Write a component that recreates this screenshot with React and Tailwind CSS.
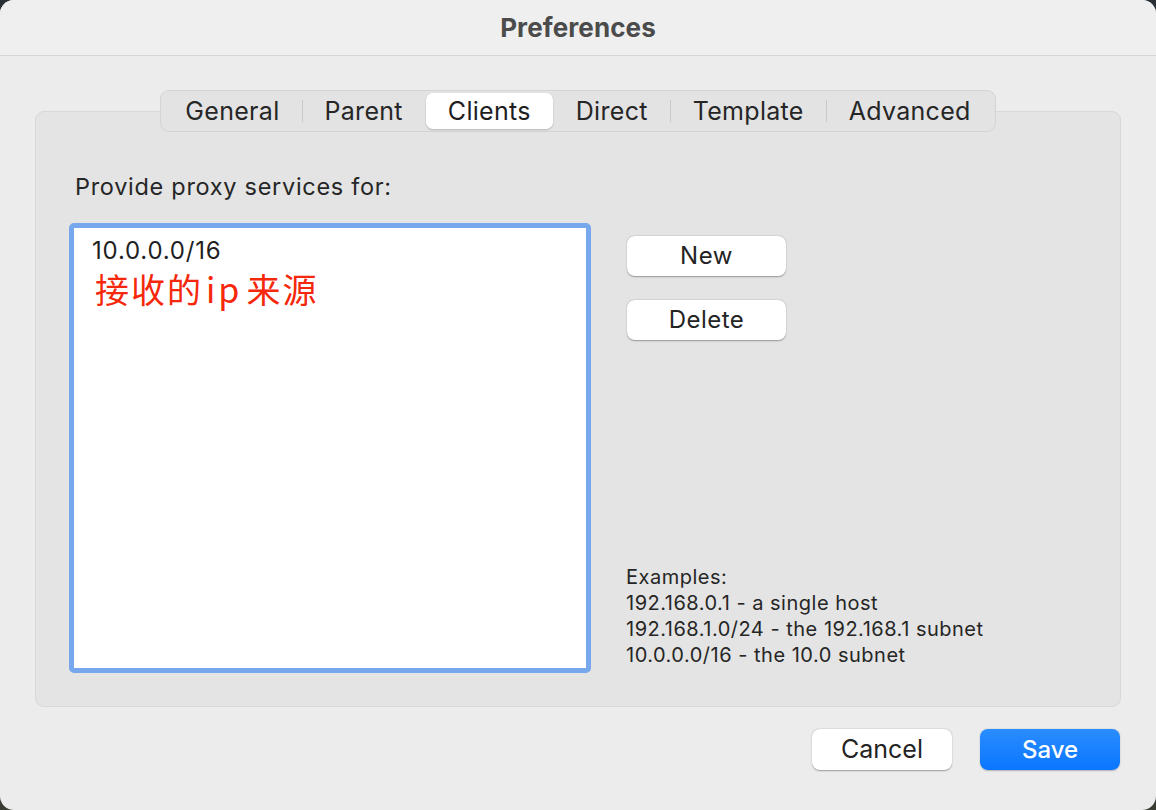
import React, { useState } from 'react';

const tabs = ['General', 'Parent', 'Clients', 'Direct', 'Template', 'Advanced'];

function Tabs({ active, onSelect }) {
    return (
        <div className="flex items-center h-[42px] p-[2px] bg-[#e3e3e3] border border-[#d4d4d4] rounded-[9px]">
            {tabs.map((t, i) => {
                const isActive = t === active;
                const prevActive = i > 0 && tabs[i - 1] === active;
                const showSep = i > 0 && !isActive && !prevActive;
                return (
                    <React.Fragment key={t}>
                        {i > 0 && (
                            <div className={showSep ? 'w-px h-[22px] bg-[#c9c9c9]' : 'w-px h-[22px]'} />
                        )}
                        <button
                            onClick={() => onSelect(t)}
                            className={
                                isActive
                                    ? 'h-[36px] px-[22px] rounded-[7px] bg-white shadow-[0_1px_2px_rgba(0,0,0,0.2)] text-[25px] tracking-[0.3px] text-[#1e1e1e]'
                                    : 'h-[36px] px-[22px] rounded-[7px] text-[25px] tracking-[0.3px] text-[#262626]'
                            }
                        >
                            {t}
                        </button>
                    </React.Fragment>
                );
            })}
        </div>
    );
}

function PlainButton({ children, className }) {
    return (
        <button
            className={
                'bg-white rounded-[8px] shadow-[0_0.5px_1.5px_rgba(0,0,0,0.35)] text-[#242424] ' +
                className
            }
        >
            {children}
        </button>
    );
}

export default function App() {
    const [active, setActive] = useState('Clients');

    return (
        <div className="w-[1156px] h-[810px] bg-[linear-gradient(to_bottom,#2a2f35,#3a3d33)] font-['Inter','Noto_Sans_CJK_SC',sans-serif]">
            <div className="w-full h-full flex flex-col bg-[#ececec] rounded-[14px] overflow-hidden">
                <div className="h-[56px] shrink-0 flex items-center justify-center bg-[#efefef] border-b border-[#d5d5d5]">
                    <span className="text-[26px] font-bold text-[#4b4b4b] tracking-[0.1px]">Preferences</span>
                </div>

                <div className="flex flex-col px-[35px] pt-[34px]">
                    <div className="relative z-10 flex justify-center">
                        <Tabs active={active} onSelect={setActive} />
                    </div>

                    <div className="-mt-[21px] h-[596px] bg-[#e4e4e4] border border-[#d8d8d8] rounded-[9px] pl-[33px] pr-[40px] pt-[62px]">
                        <div className="pl-[6px] text-[23.5px] leading-[26px] tracking-[0.7px] text-[#262626]">
                            Provide proxy services for:
                        </div>

                        <div className="flex mt-[23px]">
                            <div className="w-[522px] h-[450px] border-[5px] border-[#77a8ed] rounded-[5px] bg-white pl-[18px] pt-[10px]">
                                <div className="text-[24px] leading-[26px] tracking-[0.8px] text-[#1f1f1f]">10.0.0.0/16</div>
                                <div className="mt-[6px] pl-[3px] text-[34px] leading-[38px] tracking-[2px] text-[#f5280c] font-['Noto_Sans_CJK_SC',sans-serif]">
                                    接收的<span className="ml-[3px] mr-[4px] tracking-[3px]">ip</span>来源
                                </div>
                            </div>

                            <div className="flex flex-col ml-[36px] pt-[13px]">
                                <PlainButton className="w-[159px] h-[40px] text-[24px] tracking-[0.5px]">New</PlainButton>
                                <PlainButton className="w-[159px] h-[40px] text-[24px] tracking-[0.5px] mt-[24px]">Delete</PlainButton>

                                <div className="mt-auto text-[20px] leading-[26px] tracking-[0.5px] text-[#262626] pb-[5px] -ml-[1px]">
                                    <div>Examples:</div>
                                    <div>192.168.0.1 - a single host</div>
                                    <div>192.168.1.0/24 - the 192.168.1 subnet</div>
                                    <div>10.0.0.0/16 - the 10.0 subnet</div>
                                </div>
                            </div>
                        </div>
                    </div>

                    <div className="flex justify-end gap-[28px] mt-[22px] pr-[1px]">
                        <PlainButton className="w-[140px] h-[41px] text-[25px]">Cancel</PlainButton>
                        <button className="w-[140px] h-[41px] rounded-[8px] bg-[linear-gradient(#2a8dff,#0a76ff)] text-white text-[24px] font-medium shadow-[0_0.5px_1.5px_rgba(0,0,0,0.25)]">
                            Save
                        </button>
                    </div>
                </div>
            </div>
        </div>
    );
}
